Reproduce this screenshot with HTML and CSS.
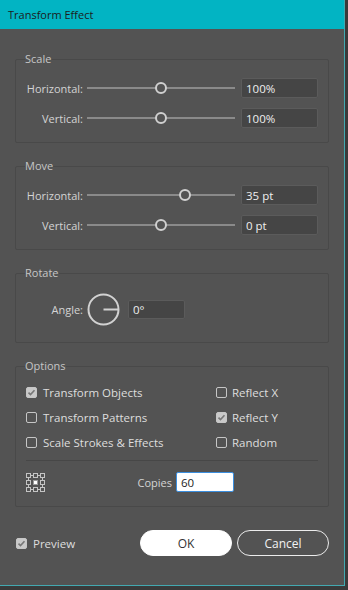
FILE: index.html
```html
<!DOCTYPE html>
<html lang="en">
<head>
    <meta charset="UTF-8">
    <title>Transform Effect</title>
    <link rel="stylesheet" href="styles.css">
</head>
<body>
    <div class="dialog">
        <div class="titlebar">Transform Effect</div>

        <div class="content">
            <fieldset class="group">
                <legend>Scale</legend>
                <div class="row">
                    <label class="row-label">Horizontal:</label>
                    <div class="slider"><span class="knob" style="left: 50%"></span></div>
                    <input class="field" type="text" value="100%">
                </div>
                <div class="row">
                    <label class="row-label">Vertical:</label>
                    <div class="slider"><span class="knob" style="left: 50%"></span></div>
                    <input class="field" type="text" value="100%">
                </div>
            </fieldset>

            <fieldset class="group">
                <legend>Move</legend>
                <div class="row">
                    <label class="row-label">Horizontal:</label>
                    <div class="slider"><span class="knob" style="left: 66%"></span></div>
                    <input class="field" type="text" value="35 pt">
                </div>
                <div class="row">
                    <label class="row-label">Vertical:</label>
                    <div class="slider"><span class="knob" style="left: 50%"></span></div>
                    <input class="field" type="text" value="0 pt">
                </div>
            </fieldset>

            <fieldset class="group rotate">
                <legend>Rotate</legend>
                <div class="row angle-row">
                    <label class="row-label">Angle:</label>
                    <svg class="dial" width="33" height="33" viewBox="0 0 33 33">
                        <circle cx="16.5" cy="16.5" r="15" fill="none" stroke="#d2d2d2" stroke-width="2"/>
                        <line x1="16.5" y1="16.5" x2="31" y2="16.5" stroke="#d2d2d2" stroke-width="2"/>
                    </svg>
                    <input class="field angle" type="text" value="0°">
                </div>
            </fieldset>

            <fieldset class="group options">
                <legend>Options</legend>
                <div class="checks">
                    <div class="check-item"><span class="check on"></span>Transform Objects</div>
                    <div class="check-item right"><span class="check"></span>Reflect X</div>
                    <div class="check-item"><span class="check"></span>Transform Patterns</div>
                    <div class="check-item right"><span class="check on"></span>Reflect Y</div>
                    <div class="check-item"><span class="check"></span>Scale Strokes &amp; Effects</div>
                    <div class="check-item right"><span class="check"></span>Random</div>
                </div>
                <div class="separator"></div>
                <div class="copies-row">
                    <svg class="ref-point" width="19" height="19" viewBox="0 0 19 19">
                        <g fill="none" stroke="#c4c4c4" stroke-width="1">
                            <rect x="0.5" y="0.5" width="4" height="4"/>
                            <rect x="7.5" y="0.5" width="4" height="4"/>
                            <rect x="14.5" y="0.5" width="4" height="4"/>
                            <rect x="0.5" y="7.5" width="4" height="4"/>
                            <rect x="14.5" y="7.5" width="4" height="4"/>
                            <rect x="0.5" y="14.5" width="4" height="4"/>
                            <rect x="7.5" y="14.5" width="4" height="4"/>
                            <rect x="14.5" y="14.5" width="4" height="4"/>
                            <path d="M5 2.5h2M12 2.5h2M5 16.5h2M12 16.5h2M2.5 5v2M2.5 12v2M16.5 5v2M16.5 12v2"/>
                        </g>
                        <rect x="7.5" y="7.5" width="4" height="4" fill="#ffffff" stroke="#9a9a9a"/>
                    </svg>
                    <label class="copies-label">Copies</label>
                    <input class="field copies" type="text" value="60">
                </div>
            </fieldset>

            <div class="footer">
                <div class="check-item preview"><span class="check on"></span>Preview</div>
                <button class="btn btn-ok">OK</button>
                <button class="btn btn-cancel">Cancel</button>
            </div>
        </div>
    </div>
</body>
</html>
```

FILE: styles.css
```css
* {
    margin: 0;
    padding: 0;
    box-sizing: border-box;
}

body {
    background: #3a3a3a;
    font-family: "Open Sans", "Noto Sans", sans-serif;
    font-size: 11px;
    color: #d4d4d4;
}

.dialog {
    width: 345px;
    height: 586px;
    background: #535353;
    border-right: 1px solid #43a9b1;
    border-bottom: 1px solid #43a9b1;
}

.titlebar {
    height: 29px;
    line-height: 29px;
    padding-left: 8px;
    background: #02b4c3;
    color: #1c1c1c;
    font-size: 11px;
}

.content {
    padding-top: 22px;
}

.group {
    margin: 0 15px 15px;
    padding: 11px 10px 14px;
    border: 1px solid #494949;
    border-radius: 2px;
}

.group legend {
    line-height: 16px;
    margin-left: -1px;
    color: #c6c6c6;
}

.row {
    display: flex;
    align-items: center;
    height: 20px;
}

.row + .row {
    margin-top: 10px;
}

.row-label {
    width: 57px;
    text-align: right;
    margin-right: 4px;
}

.slider {
    position: relative;
    flex: 0 0 148px;
    height: 2px;
    background: #8a8a8a;
    margin-right: 6px;
}

.knob {
    position: absolute;
    top: -5px;
    width: 12px;
    height: 12px;
    margin-left: -6px;
    border: 2px solid #d0d0d0;
    border-radius: 50%;
    background: #535353;
}

.field {
    width: 77px;
    height: 20px;
    padding-left: 4px;
    background: #454545;
    border: 1px solid #5b5b5b;
    border-radius: 2px;
    color: #efefef;
    font-family: inherit;
    font-size: 11.5px;
    outline: none;
}

.rotate {
    padding-top: 12px;
    padding-bottom: 16px;
}

.angle-row {
    height: 33px;
}

.dial {
    display: block;
}

.field.angle {
    width: 57px;
    height: 19px;
    margin-left: 8px;
}

.options {
    padding-top: 10px;
}

.checks {
    display: grid;
    grid-template-columns: 190px 1fr;
    row-gap: 9px;
}

.check-item {
    display: flex;
    align-items: center;
    height: 16px;
    color: #dedede;
    font-size: 11.5px;
}

.check {
    width: 11px;
    height: 11px;
    margin-right: 6px;
    border: 1px solid #c6c6c6;
    border-radius: 2px;
}

.check-item.right .check {
    margin-right: 5px;
}

.check.on {
    background: #c9c9c9 url("data:image/svg+xml,%3Csvg xmlns='http://www.w3.org/2000/svg' width='9' height='9' viewBox='0 0 9 9'%3E%3Cpath d='M1.5 4.6l2 2 4-4.4' fill='none' stroke='%23777' stroke-width='1.6'/%3E%3C/svg%3E") center no-repeat;
}

.separator {
    margin-top: 10px;
    border-top: 1px solid #474747;
}

.copies-row {
    display: flex;
    align-items: center;
    height: 20px;
    margin-top: 11px;
}

.ref-point {
    display: block;
}

.copies-label {
    width: 127px;
    text-align: right;
    margin-right: 4px;
}

.field.copies {
    width: 58px;
    background: #ffffff;
    border: 1px solid #3b8ede;
    color: #222;
}

.footer {
    display: flex;
    align-items: center;
    height: 26px;
    margin-top: 23px;
    padding: 0 15px 0 16px;
}

.preview {
    flex: 1;
}

.btn {
    width: 92px;
    height: 26px;
    border-radius: 13px;
    font-family: inherit;
    font-size: 12px;
}

.btn-ok {
    background: #ffffff;
    border: 1px solid #ffffff;
    color: #333;
}

.btn-cancel {
    margin-left: 5px;
    background: transparent;
    border: 1px solid #ececec;
    color: #f2f2f2;
}
```
